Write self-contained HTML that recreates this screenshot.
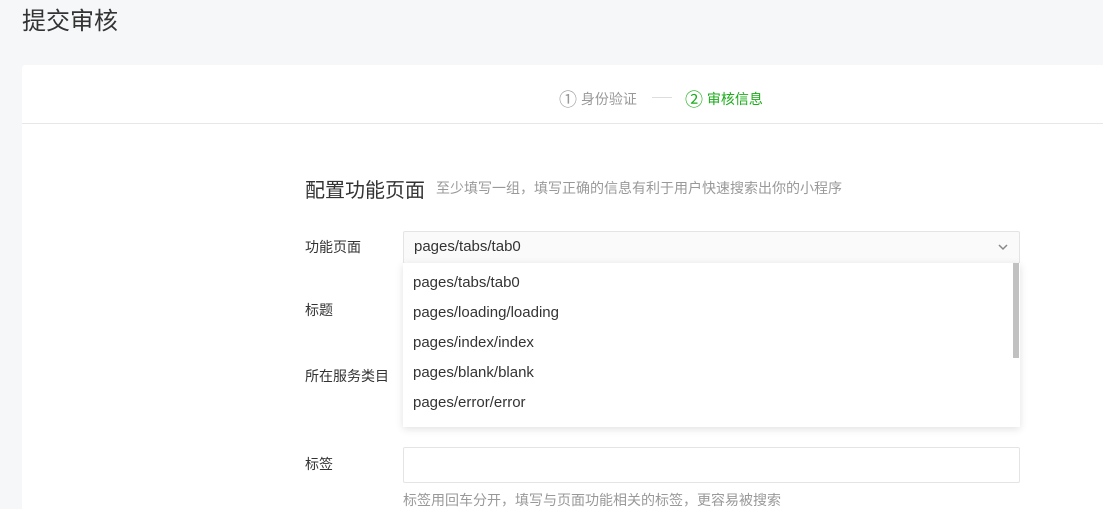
<!DOCTYPE html>
<html><head><meta charset="utf-8"><style>
html,body{margin:0;width:1103px;height:509px;overflow:hidden}
body{background:#f6f7f9;font-family:"Liberation Sans","Noto Sans CJK SC",sans-serif;position:relative}
.a{position:absolute;white-space:nowrap}
</style></head><body>
<div class="a" style="left:22px;top:1px;font-size:24px;color:#333">提交审核</div>
<div class="a" style="left:22px;top:65px;width:1100px;height:460px;background:#fff;border-radius:3px"></div>
<div class="a" style="left:22px;top:123px;width:1081px;height:1px;background:#e7e7eb"></div>
<div class="a" style="left:559px;top:86px;font-size:14px;color:#999"><span style="font-size:18px;vertical-align:-2px">①</span> 身份验证</div>
<div class="a" style="left:652px;top:97px;width:20px;height:1px;background:#ddd"></div>
<div class="a" style="left:685px;top:86px;font-size:14px;color:#1aad19"><span style="font-size:18px;vertical-align:-2px">②</span> 审核信息</div>
<div class="a" style="left:305px;top:174px;font-size:20px;color:#333">配置功能页面</div>
<div class="a" style="left:436px;top:178px;font-size:14px;color:#999">至少填写一组，填写正确的信息有利于用户快速搜索出你的小程序</div>
<div class="a" style="left:305px;top:237px;font-size:14px;color:#333">功能页面</div>
<div class="a" style="left:305px;top:300px;font-size:14px;color:#333">标题</div>
<div class="a" style="left:305px;top:366px;font-size:14px;color:#333">所在服务类目</div>
<div class="a" style="left:305px;top:454px;font-size:14px;color:#333">标签</div>
<div class="a" style="left:403px;top:231px;width:615px;height:31px;border:1px solid #e4e4e4;background:#fafafa;border-radius:2px"></div>
<div class="a" style="left:414px;top:238px;font-size:15px;color:#333">pages/tabs/tab0</div>
<svg class="a" style="left:997px;top:242px" width="12" height="10"><path d="M2 3l4 4 4-4" stroke="#888" stroke-width="1.5" fill="none"/></svg>
<div class="a" style="left:403px;top:263px;width:617px;height:164px;background:#fff;box-shadow:0 2px 8px rgba(0,0,0,.12)"></div>
<div class="a" style="left:1013px;top:263px;width:6px;height:95px;background:#c1c1c1"></div>
<div class="a" style="left:413px;top:268px;font-size:15px;color:#333;line-height:30px">pages/tabs/tab0<br>pages/loading/loading<br>pages/index/index<br>pages/blank/blank<br>pages/error/error</div>
<div class="a" style="left:403px;top:447px;width:615px;height:34px;border:1px solid #e4e4e4;background:#fff;border-radius:2px"></div>
<div class="a" style="left:403px;top:490px;font-size:14px;color:#999">标签用回车分开，填写与页面功能相关的标签，更容易被搜索</div>
</body></html>
